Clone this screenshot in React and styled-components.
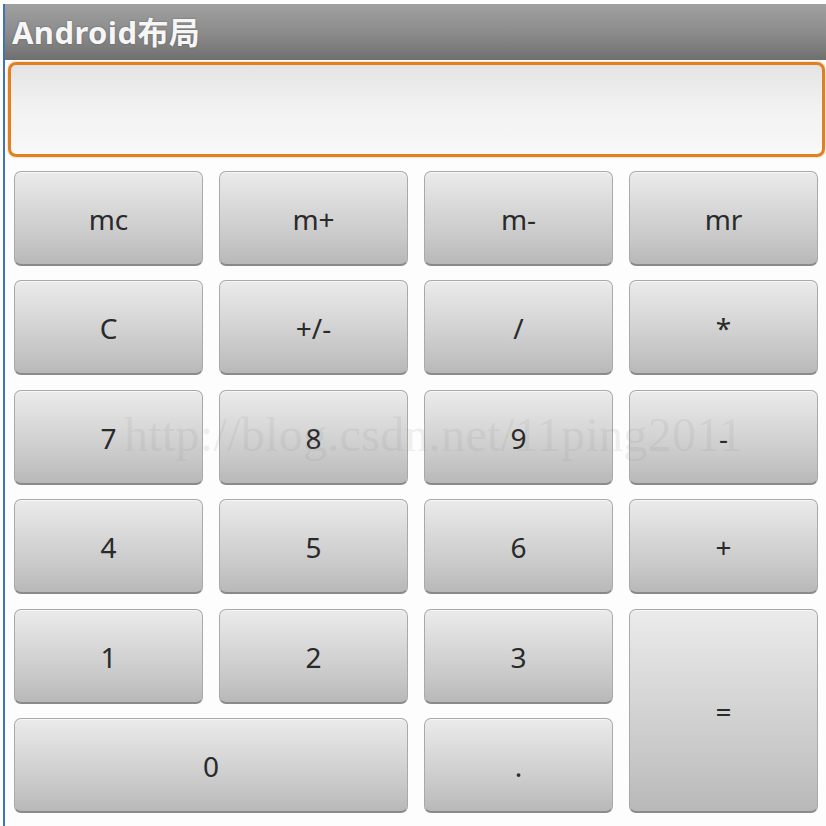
import React from "react";
import styled, { createGlobalStyle } from "styled-components";

const GlobalStyle = createGlobalStyle`
  html, body {
    margin: 0;
    padding: 0;
    background: #fdfdfd;
  }
  * {
    box-sizing: border-box;
  }
`;

const keys = [
  { label: "mc" },
  { label: "m+" },
  { label: "m-" },
  { label: "mr" },
  { label: "C" },
  { label: "+/-" },
  { label: "/" },
  { label: "*" },
  { label: "7" },
  { label: "8" },
  { label: "9" },
  { label: "-" },
  { label: "4" },
  { label: "5" },
  { label: "6" },
  { label: "+" },
  { label: "1" },
  { label: "2" },
  { label: "3" },
  { label: "=", rows: 2 },
  { label: "0", cols: 2 },
  { label: "." },
];

const App = () => (
  <>
    <GlobalStyle />
    <Page>
      <Frame>
        <TitleBar>Android布局</TitleBar>
        <Body>
          <Display />
          <Keypad>
            {keys.map((k) => (
              <Key key={k.label} $cols={k.cols} $rows={k.rows}>
                {k.label}
              </Key>
            ))}
            <Watermark>http://blog.csdn.net/11ping2011</Watermark>
          </Keypad>
        </Body>
      </Frame>
    </Page>
  </>
);

export default App;

// Page

const Page = styled.div`
  width: 826px;
  height: 826px;
  padding-top: 4px;
  padding-left: 3px;
  background: #fdfdfd;
  display: flex;
`;

const Frame = styled.div`
  flex: 1;
  display: flex;
  flex-direction: column;
  border-left: 2px solid #3f72bd;
`;

// Title bar

const TitleBar = styled.div`
  height: 56px;
  padding: 0 0 4px 7px;
  display: flex;
  align-items: center;
  background: linear-gradient(#a0a0a0 0%, #8a8a8a 55%, #6f6f6f 100%);
  color: #f6f6f6;
  font-family: "Noto Sans", "Noto Sans CJK SC", sans-serif;
  font-weight: 700;
  font-size: 31px;
  letter-spacing: 0.4px;
  text-shadow: 0 0 2px rgba(0, 0, 0, 0.35);
`;

// Body

const Body = styled.div`
  flex: 1;
  display: flex;
  flex-direction: column;
  padding: 2px 1px 0 3px;
`;

const Display = styled.div`
  height: 95px;
  border: 3px solid #e2801f;
  border-radius: 8px;
  background: linear-gradient(#e4e4e4 0%, #f1f1f1 45%, #f8f8f8 100%);
  box-shadow: 0 0 2px rgba(226, 128, 31, 0.6);
`;

// Keypad

const Keypad = styled.div`
  position: relative;
  margin: 14px 7px 0 6px;
  display: grid;
  grid-template-columns: repeat(4, 189px);
  grid-template-rows: repeat(6, 95px);
  column-gap: 16px;
  row-gap: 14.4px;
`;

const Key = styled.div`
  grid-column: span ${(p) => p.$cols || 1};
  grid-row: span ${(p) => p.$rows || 1};
  display: flex;
  align-items: center;
  justify-content: center;
  border: 1.5px solid #a9a9a9;
  border-bottom: 2px solid #8a8a8a;
  border-radius: 7px;
  background: linear-gradient(#ebebeb 0%, #dadada 35%, #c7c7c7 75%, #b8b8b8 100%);
  box-shadow: inset 0 1px 0 rgba(255, 255, 255, 0.6);
  color: #2a2a2a;
  font-family: "Noto Sans", "Open Sans", sans-serif;
  font-size: 28px;
  padding-top: 2px;
`;

// Watermark

const Watermark = styled.div`
  position: absolute;
  left: 110px;
  top: 236px;
  font-family: "Liberation Serif", serif;
  font-size: 48px;
  letter-spacing: 0.3px;
  color: rgba(140, 140, 140, 0.15);
  white-space: nowrap;
  pointer-events: none;
`;
